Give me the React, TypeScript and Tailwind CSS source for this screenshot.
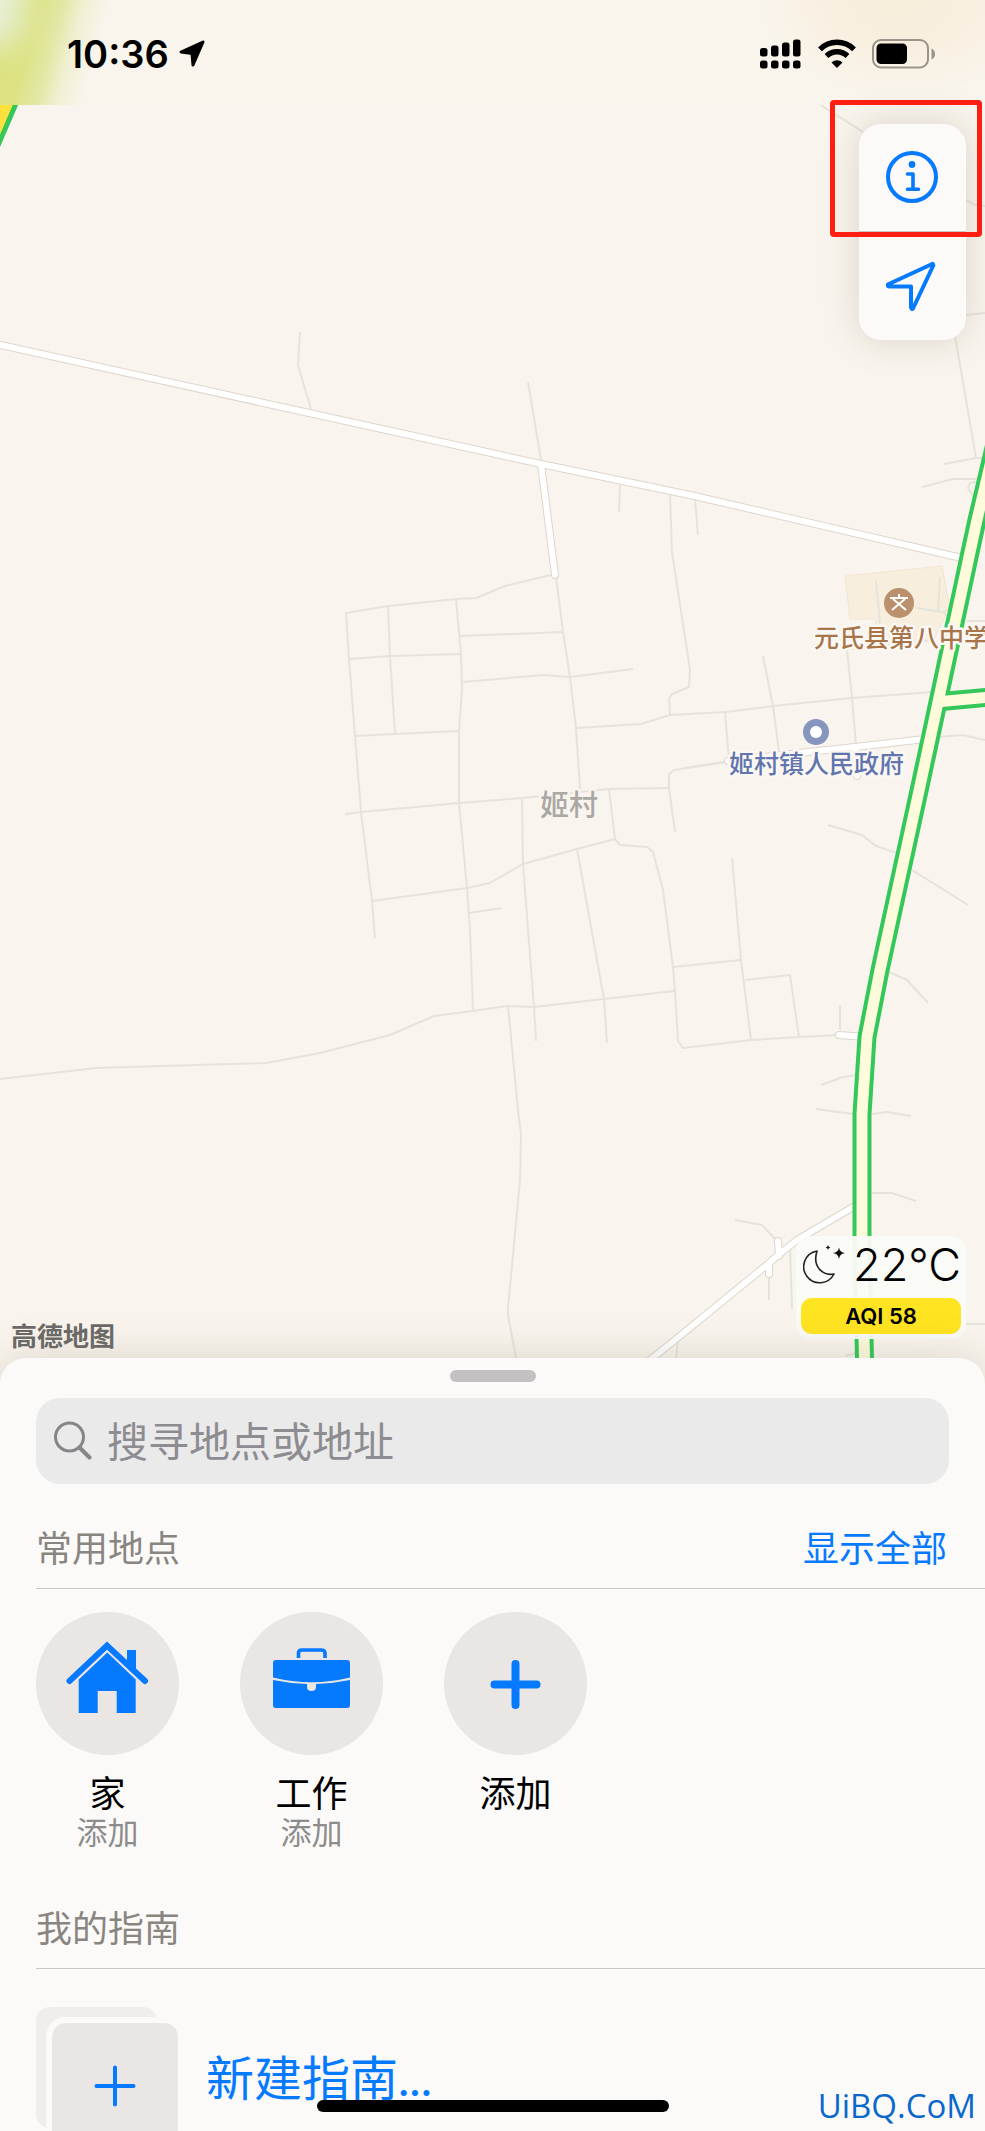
import React from "react";

const minorRoads = [
  "300,332 298,365 311,409",
  "528,382 541,460",
  "620,485 619,512",
  "670,494 672,552 690,670 689,687 672,694 669,699 670,715",
  "695,500 698,535",
  "555,574 505,586 476,598 456,599 388,606 346,613 349,659 355,736 361,812 372,901 375,938",
  "388,606 390,656 395,734",
  "456,599 461,654 462,690 459,731 459,803 467,888 470,930 473,1011",
  "349,659 390,656 461,654",
  "355,736 395,734 459,731",
  "460,636 563,632",
  "463,682 543,675 570,677 633,669",
  "556,577 563,632 570,677 576,728 580,789",
  "576,728 641,724 670,715 726,712 773,706 852,698 932,692",
  "345,814 361,812 459,803 522,798 609,789 668,788",
  "609,789 615,839 620,845 647,847 653,852 663,890 673,967 675,991 678,1041 683,1048 751,1040 799,1037 839,1035",
  "675,832 669,788 669,774 674,770 720,763 729,761",
  "685,768 729,761",
  "522,798 523,864 534,1007 536,1041",
  "577,849 604,999 607,1043",
  "372,901 467,888 490,883 523,864 577,849 615,839",
  "469,913 502,908",
  "0,1079 96,1068 266,1063 320,1053 390,1035 434,1016 473,1011 507,1006 534,1007 604,999 674,991",
  "508,1006 518,1110 521,1135 520,1180 508,1308 508,1315 516,1358",
  "673,967 741,960",
  "732,858 741,960 751,1040",
  "745,980 790,975 799,1037",
  "840,1005 840,1030",
  "828,825 862,835 876,846 897,853",
  "912,870 968,905",
  "889,972 907,980 928,1003",
  "821,1085 843,1077 858,1075",
  "816,1109 853,1114",
  "872,1114 887,1112 911,1116",
  "872,1193 892,1193 916,1201",
  "735,1220 762,1225 776,1240",
  "769,1276 769,1300",
  "790,1250 792,1309",
  "678,1340 676,1358",
  "960,1324 985,1324",
  "845,1356 856,1353",
  "954,330 966,400 976,458",
  "944,464 976,458 985,458",
  "922,487 953,479 980,479",
  "976,482 970,483 968,488 974,498",
  "763,656 773,706 779,752",
  "725,712 729,760",
  "847,650 852,698 856,745",
  "847,649 880,646 935,640",
  "876,581 880,624",
  "940,577 938,611",
  "917,608 948,613",
  "967,621 985,621",
  "938,737 963,735 985,740",
  "819,104 863,132",
  "966,200 975,205 985,206",
  "966,315 985,313",
];

const whiteRoads = [
  "-4,344 300,411 541,464 690,495 966,559",
  "541,464 555,575",
  "728,761 808,752 855,747 925,739",
  "855,747 857,776",
  "839,1035 866,1037",
  "860,1203 797,1240 777,1256 768,1264 675,1340 645,1364",
  "778,1241 779,1256",
  "769,1264 769,1274",
];

const greenRoad = "1003,410 977,520 969,557 940,693 917,800 880,970 867,1037 862,1114 862,1250 865,1380";
const greenBranch = "936,702 990,697";

function MapDrawing() {
  return (
    <svg
      viewBox="0 0 985 1400"
      className="absolute left-0 top-0 w-full"
      fill="none"
      strokeLinejoin="round"
      role="img"
      aria-label="地图"
    >
      <path d="M845 576 L942 566 L948 599 L953 600 L934 640 L880 640 L875 619 L850 619 Z" fill="#f7eedd" stroke="#f1e6d4" />
      <g stroke="#e5e4db" strokeWidth="2">
        {minorRoads.map((p) => (
          <polyline key={p} points={p} />
        ))}
      </g>
      <g stroke="#ded6cc" strokeWidth="8" strokeLinecap="round">
        {whiteRoads.map((p) => (
          <polyline key={p} points={p} />
        ))}
      </g>
      <g stroke="#ffffff" strokeWidth="6" strokeLinecap="round">
        {whiteRoads.map((p) => (
          <polyline key={p} points={p} />
        ))}
      </g>
      <circle cx="948" cy="613" r="3" fill="#fff" stroke="#ded6cc" />
      <g stroke="#34c759" strokeWidth="19">
        <polyline points={greenRoad} />
        <polyline points={greenBranch} />
      </g>
      <g stroke="#fdfbdc" strokeWidth="11">
        <polyline points={greenRoad} />
        <polyline points={greenBranch} />
      </g>
      <path d="M0 60 H34 L0 138 Z" fill="#ffe03c" />
      <path d="M34 62 L-4 150" stroke="#34c759" strokeWidth="5" />

      <circle cx="899" cy="603" r="15" fill="#ba906d" />
      <path d="M890 598 H908 M899 594 V598 M892 610 L905 599 M906 610 L893 599" stroke="#fff" strokeWidth="2" />
      <circle cx="816" cy="732" r="13" fill="#8796bf" />
      <circle cx="816" cy="732" r="6" fill="#fff" />

      <g
        className="[font-family:'Noto_Sans_CJK_SC',sans-serif] font-medium [paint-order:stroke]"
        stroke="#fbf8f4"
        strokeWidth="5"
      >
        <text x="814" y="647" fontSize="25" fill="#a8744a">元氏县第八中学</text>
        <text x="729" y="773" fontSize="25" fill="#6275ad">姬村镇人民政府</text>
        <text x="540" y="816" fontSize="29" fill="#a9a8a4" stroke="#f9f4ed">姬村</text>
      </g>
    </svg>
  );
}

function StatusBar() {
  return (
    <header className="relative flex h-[105px] items-start justify-between overflow-hidden bg-[#f9f4ec] pl-[67px] pr-[50px] pt-[31px]">
      <div className="absolute inset-y-0 left-0 w-28 bg-[linear-gradient(105deg,#dce27c_0%,#dde385_30%,#e2e8a5_46%,#f0f0d2_60%,#f9f4ec_78%)]" />
      <div className="absolute -left-10 -top-16 h-28 w-16 rounded-full bg-[#e6eed8] blur-lg" />
      <div className="absolute inset-y-0 right-0 w-60 bg-[radial-gradient(ellipse_at_65%_0%,#f8eedc_0%,#f8efdf_30%,#f9f4ec_65%)]" />
      <div className="relative flex items-center gap-2.5">
        <time className="text-[38px] font-semibold leading-[46px] text-black">10:36</time>
        <svg width="26" height="28" viewBox="0 0 26 28" aria-hidden="true">
          <path d="M24 2 L2 12 L13 13.500 L14 25 Z" fill="#000" stroke="#000" strokeWidth="3" strokeLinejoin="round" />
        </svg>
      </div>
      <div className="relative flex h-[46px] items-center gap-4">
        <svg width="42" height="30" viewBox="0 0 42 30" aria-hidden="true">
          <rect x="0" y="9" width="7.500" height="8.500" rx="2.500" />
          <rect x="11" y="6.500" width="7.500" height="11" rx="2.500" />
          <rect x="22" y="3.500" width="7.500" height="14" rx="2.500" />
          <rect x="33" y="0.500" width="7.500" height="17" rx="2.500" />
          <rect x="0" y="21.500" width="7.500" height="8" rx="2.500" />
          <rect x="11" y="21.500" width="7.500" height="8" rx="2.500" />
          <rect x="22" y="21.500" width="7.500" height="8" rx="2.500" />
          <rect x="33" y="21.500" width="7.500" height="8" rx="2.500" />
        </svg>
        <svg width="38" height="30" viewBox="0 0 38 30" aria-hidden="true">
          <path d="M2 10.300 A24 24 0 0 1 36 10.300" fill="none" stroke="#000" strokeWidth="5.400" />
          <path d="M8.500 17 A15 15 0 0 1 29.500 17" fill="none" stroke="#000" strokeWidth="5.400" />
          <path d="M19 29 L13.500 23.500 A8 8 0 0 1 24.500 23.500 Z" />
        </svg>
        <svg width="63" height="30" viewBox="0 0 63 30" aria-hidden="true">
          <rect x="1" y="1" width="55" height="27.500" rx="8" fill="none" stroke="#98948b" strokeWidth="2" />
          <rect x="4.500" y="4.500" width="30.500" height="20.500" rx="4.500" />
          <path d="M59.500 9.500 Q63 11 63 15 Q63 19 59.500 20.500 Z" fill="#98948b" />
        </svg>
      </div>
    </header>
  );
}

function MapControls() {
  return (
    <div className="absolute right-[19px] top-[124px] flex w-[107px] flex-col rounded-[22px] bg-[#fcfaf9] shadow-[0_0_36px_rgba(110,105,80,0.22)]">
      <button type="button" aria-label="信息" className="flex h-[108px] items-center justify-center border-b border-[#c9c8c6]">
        <svg width="54" height="54" viewBox="-26 -26 54 54" fill="none" stroke="#057aff" strokeWidth="4">
          <circle r="24" />
          <circle cy="-12.500" r="3.400" fill="#057aff" stroke="none" />
          <path d="M-4.500 -3 H1 V12 M-4.500 12.200 H6.500" strokeWidth="3.600" strokeLinecap="round" strokeLinejoin="round" />
        </svg>
      </button>
      <button type="button" aria-label="定位" className="flex h-[108px] items-center justify-center">
        <svg width="54" height="54" viewBox="886 259 54 54" fill="none" stroke="#057aff" strokeWidth="4" strokeLinejoin="round">
          <path d="M932.700 263.800 L887.800 284.500 Q887.500 286.500 889 286.500 L911 286.500 L911 307.500 Q911.800 310 913 308.500 L933.300 265.500 Z" />
        </svg>
      </button>
    </div>
  );
}

function Weather() {
  return (
    <div className="absolute bottom-[19px] right-[19px] flex w-[170px] flex-col gap-1.5 rounded-[14px] bg-[#fafaf7]/95 px-[5px] pb-[5px] pt-0.5">
      <div className="flex items-center justify-between">
        <svg width="44" height="40" viewBox="0 0 44 40" fill="none" className="ml-0.5 shrink-0" aria-hidden="true">
          <path
            d="M14 6 A16 16 0 1 0 31 29 C20 31 9 22 14 6 Z"
            stroke="#222"
            strokeWidth="1.600"
            strokeLinejoin="round"
          />
          <path d="M36 2.500 Q36.700 7.300 42 8 Q36.700 8.700 36 14 Q35.300 8.700 30 8 Q35.300 7.300 36 2.500 Z M25 0 Q25.300 2.200 27.500 2.500 Q25.300 2.800 25 5 Q24.700 2.800 22.500 2.500 Q24.700 2.200 25 0 Z" fill="#111" />
        </svg>
        <span className="whitespace-nowrap text-[45px] font-light leading-[54px] text-black">22°C</span>
      </div>
      <div className="flex h-9 items-center justify-center rounded-[11px] bg-[#ffe422] text-[22px] font-semibold text-black">AQI 58</div>
    </div>
  );
}

function SectionHeader({ title, action }: { title: string; action?: string }) {
  return (
    <div className="flex items-center justify-between border-b border-[#c9c7c5] pb-3 pr-[38px]">
      <h2 className="text-[36px] leading-[54px] text-[#898580]">{title}</h2>
      {action && (
        <a href="#all" className="text-[36px] leading-[54px] text-[#057aff]">
          {action}
        </a>
      )}
    </div>
  );
}

function Place({ label, sub, children }: { label: string; sub?: string; children: React.ReactNode }) {
  return (
    <button type="button" className="flex w-[143px] flex-col items-center">
      <span className="flex size-[143px] items-center justify-center rounded-full bg-[#e9e6e3]">
        <svg viewBox="0 0 143 143" className="size-full" fill="#057aff" aria-hidden="true">
          {children}
        </svg>
      </span>
      <span className="mt-[17px] text-[36px] leading-[44px] text-black">{label}</span>
      {sub && <span className="text-[31px] leading-[34px] text-[#8c8c8d]">{sub}</span>}
    </button>
  );
}

export default function App() {
  return (
    <div className="relative flex h-screen flex-col overflow-hidden bg-[#f9f4ed] [font-family:Inter,'Noto_Sans_CJK_SC',sans-serif]">
      <main className="relative min-h-0 flex-1">
        <MapDrawing />
        <StatusBar />
        <MapControls />
        <div className="absolute right-[3px] top-[100px] h-[137px] w-[152px] rounded-[4px] border-5 border-[#ff1f12]" />
        <Weather />
        <div className="absolute bottom-[3px] left-[11px] text-[26px] font-bold leading-[36px] text-[#6b6a68]">高德地图</div>
      </main>

      <section className="relative shrink-0 rounded-t-[26px] bg-[#fcfaf8] pl-9 pt-3 shadow-[0_0_44px_rgba(110,105,80,0.22)]">
        <div className="mr-9 flex justify-center">
          <div className="h-3 w-[86px] rounded-full bg-[#c3c1c2]" />
        </div>
        <label className="mr-9 mt-4 flex h-[86px] items-center gap-[15px] rounded-[24px] bg-[#ebeaea] pl-[18px]">
          <svg width="38" height="40" viewBox="0 0 38 40" fill="none" stroke="#85858a" className="shrink-0" aria-hidden="true">
            <circle cx="15.500" cy="16" r="14" strokeWidth="3" />
            <path d="M25.500 26.500 L35.500 36.500" strokeWidth="4" strokeLinecap="round" />
          </svg>
          <input
            type="search"
            aria-label="搜寻地点或地址"
            placeholder="搜寻地点或地址"
            className="h-full min-w-0 flex-1 bg-transparent pt-0.5 text-[41px] outline-none placeholder:text-[#8c8c91]"
          />
        </label>

        <div className="mt-[38px]">
          <SectionHeader title="常用地点" action="显示全部" />
          <div className="mt-[23px] flex items-start gap-[61px]">
            <Place label="家" sub="添加">
              <path d="M91 38 H100 V60 L91 51 Z" />
              <path d="M33.500 69 L71 33.500 L109 69" fill="none" stroke="#057aff" strokeWidth="6" strokeLinecap="round" />
              <path d="M42.700 67.500 L71.300 40.500 L99.700 67.500 V101 H80.700 V79 H61.700 V101 H42.700 Z" />
            </Place>
            <Place label="工作" sub="添加">
              <path d="M58.500 46 V41 Q58.500 38 62 38 H81 Q85 38 85 41 V46" fill="none" stroke="#057aff" strokeWidth="3.600" />
              <path d="M36 48 H107 Q110 48 110 51 V65.500 Q71.500 75 33 65.500 V51 Q33 48 36 48 Z" />
              <path d="M33 68 Q50 71.500 67 72 V75 Q67 79 71.500 79 Q76 79 76 75 V72 Q93 71.500 110 68 V93 Q110 96 107 96 H36 Q33 96 33 93 Z" />
            </Place>
            <Place label="添加">
              <path d="M50.500 72.500 H92.500 M71.500 52 V93" stroke="#057aff" strokeWidth="8" strokeLinecap="round" />
            </Place>
          </div>
        </div>

        <div className="mt-[52px]">
          <SectionHeader title="我的指南" />
          <button type="button" className="mt-[38px] flex h-31 w-full items-start gap-[22px] text-left">
            <span className="grid shrink-0">
              <span className="col-start-1 row-start-1 size-[121px] rounded-[14px] bg-[#f0eeec]" />
              <span className="col-start-1 row-start-1 ml-2.5 mt-2.5 flex size-[138px] items-center justify-center rounded-[20px] border-[6px] border-[#fcfaf8] bg-[#e9e6e3]">
                <svg width="42" height="42" viewBox="0 0 42 42" stroke="#057aff" strokeWidth="4" strokeLinecap="round" aria-hidden="true">
                  <path d="M2.500 21 H39.500 M21 2.500 V39.500" />
                </svg>
              </span>
            </span>
            <span className="pt-9 text-[48px] leading-[70px] text-[#057aff] [font-family:Lato,'Noto_Sans_CJK_SC',sans-serif]">新建指南...</span>
          </button>
        </div>
      </section>

      <div className="absolute bottom-[19px] left-1/2 h-3 w-[352px] -translate-x-1/2 rounded-full bg-black" />
      <div className="absolute bottom-[2px] right-[9px] text-[33px] leading-[46px] text-[#0a68cc] [font-family:'Open_Sans',sans-serif]">UiBQ.CoM</div>
    </div>
  );
}
